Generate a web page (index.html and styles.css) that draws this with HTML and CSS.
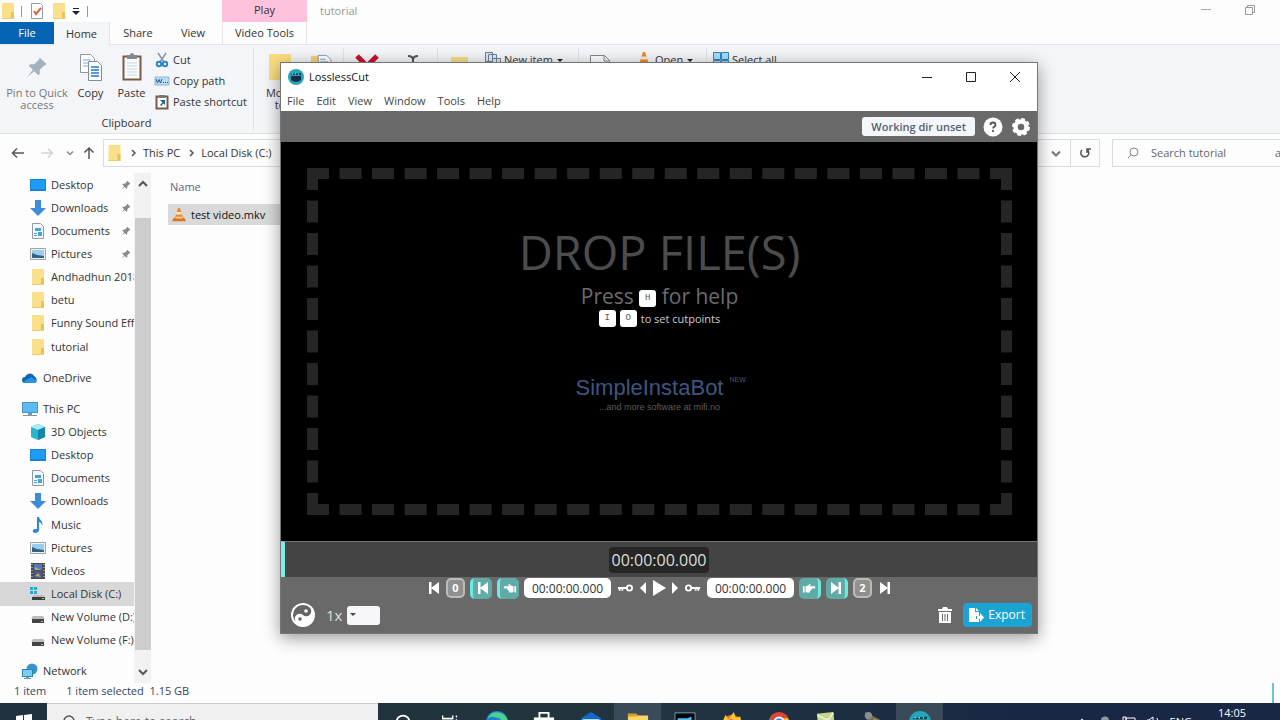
FILE: index.html
```html
<!DOCTYPE html>
<html lang="en">
<head>
<meta charset="utf-8">
<title>LosslessCut</title>
<link rel="stylesheet" href="styles.css">
</head>
<body>
<svg class="defs" aria-hidden="true">
  <defs>
    <symbol id="folder" viewBox="0 0 14 16"><path d="M1 0h12v16H1z" fill="#fbe08c"/><path d="M10 9h3v7h-3z" fill="#e9c25a"/><path d="M1 15h12v1H1z" fill="#eecb6b"/></symbol>
    <symbol id="desktop" viewBox="0 0 16 16"><path d="M0 2h16v12H0z" fill="#1683d8"/><path d="M1 3h14v9H1z" fill="#1e9bf5"/></symbol>
    <symbol id="download" viewBox="0 0 16 16"><path d="M5 0h6v8h5l-8 8-8-8h5z" fill="#3c8cd9"/></symbol>
    <symbol id="document" viewBox="0 0 16 16"><path d="M2.500.500h8l3 3v12h-11z" fill="#f4f8fa" stroke="#8c9aa5"/><path d="M5 5h6v3H5zM4 10h3v1H4zM4 12h3v1H4zM8 9h4v4H8z" fill="#4aa3d6"/></symbol>
    <symbol id="picture" viewBox="0 0 16 16"><path d="M.5 2.500h15v11H.5z" fill="#eef4f8" stroke="#9aa4ac"/><path d="M2 4h12v8H2z" fill="#9ccbee"/><path d="M2 7l5 2 7 1v2H2z" fill="#33647e"/></symbol>
    <symbol id="cloud" viewBox="0 0 16 16"><path d="M3 13a3 3 0 0 1 0-6 5 5 0 0 1 9-1 4 4 0 0 1 1 7z" fill="#1264b4"/><path d="M1 12l8-5 6 4a3 3 0 0 1-2 2H3z" fill="#2791e3"/></symbol>
    <symbol id="pc" viewBox="0 0 16 16"><path d="M0 1h16v11H0z" fill="#4a90c2"/><path d="M1 2h14v9H1z" fill="#5cbaf5"/><path d="M6 12h4v2H6zM1 14h14v1H1z" fill="#7b97aa"/></symbol>
    <symbol id="cube" viewBox="0 0 16 16"><path d="M8 0l7 3v10l-7 3-7-3V3z" fill="#27b5cf"/><path d="M8 0l7 3-7 3-7-3z" fill="#a8ecf3"/><path d="M8 6l7-3v10l-7 3z" fill="#1586a9"/></symbol>
    <symbol id="music" viewBox="0 0 16 16"><path d="M7 0h2c0 3 5 4 3 9 0-3-2-4-3-4v8c0 2-2 3-4 3-3 0-3-4 0-4h2z" fill="#2789e0"/></symbol>
    <symbol id="video" viewBox="0 0 16 16"><path d="M1 0h14v16H1z" fill="#4c4c50"/><path d="M4 1h8v6H4z" fill="#5578b8"/><path d="M4 8h8v7H4z" fill="#3f5a94"/><path d="M5 4l6 3H5zM5 13l3-3 3 4z" fill="#c2a552"/><path d="M2 1v14M14 1v14" stroke="#ddd" stroke-dasharray="1 2"/></symbol>
    <symbol id="disk" viewBox="0 0 16 16"><path d="M3 7h10l2 3H1z" fill="#bcbcbc"/><path d="M2 10h12v4H2z" fill="#444"/><path d="M11 12h2v1h-2z" fill="#8fdc9c"/></symbol>
    <symbol id="windisk" viewBox="0 0 16 16"><path d="M0 1h3v3H0zM4 1h3v3H4zM0 5h3v3H0zM4 5h3v3H4z" fill="#22a9dd"/><path d="M4 9h9l2 2H2z" fill="#bcbcbc"/><path d="M2 11h13v3H2z" fill="#3d3d3d"/><path d="M12 12h2v1h-2z" fill="#8fdc9c"/></symbol>
    <symbol id="network" viewBox="0 0 16 16"><circle cx="10" cy="6" r="5.500" fill="#3b93cc"/><path d="M0 6h11v8H0z" fill="#2e84bd"/><path d="M1 7h9v6H1z" fill="#77cdf5"/><path d="M4 14h3v1h2v1H2v-1h2z" fill="#7b97aa"/></symbol>
    <symbol id="pin" viewBox="0 0 16 16"><path d="M10 1l5 5-2 1-3 3 0 3-1 1-3-3-5 4 4-5-3-3 1-1h3l3-3z" fill="currentColor"/></symbol>
    <symbol id="cone" viewBox="0 0 16 16"><path d="M7 0h2l4 12H3z" fill="#f08a1d"/><path d="M5.500 4.500h5l1 3h-7z" fill="#f3ece4"/><path d="M2 11h12l2 4H0z" fill="#e0731b"/><path d="M4 10h8v2H4z" fill="#f6d2ae"/></symbol>
    <symbol id="pages" viewBox="0 0 24 28"><path d="M1.500 1.500h10l4 4v14h-14z" fill="#fff" stroke="#8b97a6"/><path d="M4 7h8M4 10h8M4 13h8" stroke="#7da7d9"/><path d="M9.500 8.500h9l4 4v15h-13z" fill="#fff" stroke="#7f8c9c"/><path d="M12 14h8M12 17h8M12 20h8M12 23h8" stroke="#5c97dc" stroke-width="2"/></symbol>
    <symbol id="clipboard" viewBox="0 0 20 28"><path d="M1.500 3.500h17v23h-17z" fill="#fbfcfe" stroke="#7a5a48" stroke-width="2"/><path d="M5 2h3a2 2 0 0 1 4 0h3v4H5z" fill="#84888f"/><path d="M5 10h10M5 13h10M5 16h10M5 19h10M5 22h10" stroke="#c3d3e8"/></symbol>
    <symbol id="skipback" viewBox="0 0 12 14"><path d="M1 1h2.500v12H1zM11 1v12L3 7z" fill="currentColor"/></symbol>
    <symbol id="skipnext" viewBox="0 0 12 14"><path d="M8.500 1H11v12H8.500zM1 1v12l8-6z" fill="currentColor"/></symbol>
    <symbol id="hand" viewBox="0 0 16 14"><path d="M1 5h2v7H1zM4 5l3-1 2-2 1 1-1 2h6v2.500h-4V9h-1v1.500H9V12H5l-1-1z" fill="currentColor"/></symbol>
    <symbol id="key" viewBox="0 0 18 10"><circle cx="4" cy="5" r="3" fill="none" stroke="currentColor" stroke-width="2"/><path d="M7 4h10v2h-1v2h-2V6h-1v2h-2V6H7z" fill="currentColor"/></symbol>
    <symbol id="losslesscut" viewBox="0 0 16 16"><circle cx="8" cy="8" r="8" fill="#22a5bd"/><path d="M3 5l10-1v2H3z" fill="#173e4d"/><path d="M3 7h10v4q-5 4-10 0z" fill="#142f47"/><path d="M4 5h1M7 5h1M10 5h1" stroke="#bdf0f4"/></symbol>
    <symbol id="winlogo" viewBox="0 0 16 16"><path d="M0 2l7-1v7H0zM8 1l8-1v8H8zM0 9h7v6l-7-1zM8 9h8v7l-8-1z" fill="#fff"/></symbol>
  </defs>
</svg>

<main class="desktop">
  <section class="explorer" aria-label="File Explorer">
    <header class="ex-title">
      <div class="quick">
        <svg class="i14"><use href="#folder"/></svg><i class="bar"></i>
        <svg class="i16" viewBox="0 0 16 16"><path d="M2.500.500h9l2 2v13h-11z" fill="#fff" stroke="#99a"/><path d="M5 8l2 3 5-6" fill="none" stroke="#e0603f" stroke-width="2"/></svg>
        <svg class="i14"><use href="#folder"/></svg>
        <svg class="i8" viewBox="0 0 8 8"><path d="M1 1h6v1H1zM0 4h8L4 8z" fill="#222"/></svg><i class="bar"></i>
      </div>
      <div class="context">Play</div>
      <h1 class="ex-name">tutorial</h1>
      <div class="ex-ctl">
        <button aria-label="Minimize"><svg class="i12" viewBox="0 0 12 12"><path d="M1 5.500h10" stroke="#aaa"/></svg></button>
        <button aria-label="Restore"><svg class="i12" viewBox="0 0 12 12"><path d="M1.500 3.500h7v7h-7zM3.500 3V1.500h7v7H9" fill="none" stroke="#999"/></svg></button>
      </div>
    </header>
    <nav class="tabs">
      <button class="tab file">File</button><button class="tab home">Home</button><button class="tab share">Share</button><button class="tab view">View</button><button class="tab tools">Video Tools</button>
    </nav>
    <div class="ribbon">
      <div class="rgroup clip">
        <div class="rbody">
          <button class="big pinbig"><svg viewBox="0 0 16 16"><use href="#pin"/></svg>Pin to Quick access</button>
          <button class="big"><svg><use href="#pages"/></svg>Copy</button>
          <button class="big"><svg><use href="#clipboard"/></svg>Paste</button>
          <div class="smalls">
            <button><svg class="i16" viewBox="0 0 16 16"><path d="M4 1l6 9M12 1l-6 9" stroke="#8396a8" stroke-width="1.500"/><circle cx="5" cy="12" r="2.200" fill="none" stroke="#2a86c8" stroke-width="2"/><circle cx="11" cy="12" r="2.200" fill="none" stroke="#2a86c8" stroke-width="2"/></svg>Cut</button>
            <button><svg class="i16" viewBox="0 0 16 16"><path d="M1 4h14v8H1z" fill="#b9dcf2" stroke="#8fb9d6"/><path d="M2 6l1.500 4L5 6.500 6.500 10 8 6M9 9.500h1M11 9.500h1M13 9.500h1" fill="none" stroke="#265b85"/></svg>Copy path</button>
            <button><svg class="i16" viewBox="0 0 16 16"><path d="M2.500 2.500h11v12h-11z" fill="#fff" stroke="#7a5a48" stroke-width="2"/><path d="M5 1h6v3H5z" fill="#777"/><path d="M6 6h5v5L9.500 9.500 7 12 6 11l2.500-2.500z" fill="#23629f"/></svg>Paste shortcut</button>
          </div>
        </div>
        <div class="rlabel">Clipboard</div>
      </div>
      <div class="rgroup organize">
        <div class="rbody">
          <button class="big"><svg viewBox="0 0 24 28"><path d="M1 1h22v26H1z" fill="#fadc80"/><path d="M23 16l-8 5 8 5z" fill="#3277b5"/></svg>Move<br>to</button>
          <button class="big" aria-label="Copy to"><svg viewBox="0 0 28 28"><path d="M1 1h14v26H1z" fill="#f5d277"/><path d="M9.500.500h10l5 5v14h-15z" fill="#fff" stroke="#7f8c9c"/><path d="M12 5h6M12 8h9M12 11h9" stroke="#5c97dc"/></svg></button>
        </div>
      </div>
      <div class="rgroup modify">
        <div class="rbody">
          <button class="big" aria-label="Delete"><svg viewBox="0 0 24 28"><path d="M2 3l20 20M22 3L2 23" stroke="#c8102e" stroke-width="5"/></svg></button>
          <button class="big" aria-label="Rename"><svg viewBox="0 0 24 28"><path d="M7 3q5 0 5 4 0-4 5-4M12 6v18" fill="none" stroke="#555" stroke-width="2"/></svg></button>
        </div>
      </div>
      <div class="rgroup new">
        <div class="rbody">
          <button class="big" aria-label="New folder"><svg viewBox="0 0 24 28"><path d="M4 4h17v22H4z" fill="#fadc80"/></svg></button>
          <div class="smalls"><button><svg class="i16" viewBox="0 0 16 16"><path d="M.5.500h7v9h-7zM3.500 2.500h8v11h-8zM7.500 6.500h8v9h-8z" fill="#dfeaf5" stroke="#67809a"/></svg>New item <svg class="i8" viewBox="0 0 8 8"><path d="M1 3h6L4 6z" fill="#222"/></svg></button></div>
        </div>
      </div>
      <div class="rgroup open">
        <div class="rbody">
          <button class="big" aria-label="Properties"><svg viewBox="0 0 24 28"><path d="M2.500 2.500h14l5 5v19h-19zM16 3v5h5" fill="#fff" stroke="#888"/></svg></button>
          <div class="smalls"><button><svg class="i16"><use href="#cone"/></svg>Open <svg class="i8" viewBox="0 0 8 8"><path d="M1 3h6L4 6z" fill="#222"/></svg></button></div>
        </div>
      </div>
      <div class="rgroup select">
        <div class="smalls"><button><svg class="i16" viewBox="0 0 16 16"><path d="M.5.500h7v7h-7zM8.500.500h7v7h-7zM.5 8.500h7v7h-7zM8.500 8.500h7v7h-7z" fill="#a9dcfa" stroke="#2d86bf"/></svg>Select all</button></div>
      </div>
    </div>
    <div class="addr">
      <div class="arrows">
        <button aria-label="Back"><svg class="i14" viewBox="0 0 14 14"><path d="M13 7H2M6 2.500L1.500 7 6 11.500" fill="none" stroke="#555" stroke-width="1.500"/></svg></button>
        <button aria-label="Forward"><svg class="i14" viewBox="0 0 14 14"><path d="M1 7h11M8 2.500L12.500 7 8 11.500" fill="none" stroke="#d4d4d4" stroke-width="1.500"/></svg></button>
        <button class="recent" aria-label="Recent"><svg class="i8" viewBox="0 0 8 8"><path d="M1 2.500L4 5.500l3-3" fill="none" stroke="#888" stroke-width="1.500"/></svg></button>
        <button aria-label="Up"><svg class="i14" viewBox="0 0 14 14"><path d="M7 13V2M2.500 6.500L7 2l4.500 4.500" fill="none" stroke="#555" stroke-width="1.500"/></svg></button>
      </div>
      <div class="path">
        <svg class="i14"><use href="#folder"/></svg><svg class="chev" viewBox="0 0 8 8"><path d="M3 1l3 3-3 3" fill="none" stroke="#555" stroke-width="1.500"/></svg><a href="#">This PC</a><svg class="chev" viewBox="0 0 8 8"><path d="M3 1l3 3-3 3" fill="none" stroke="#555" stroke-width="1.500"/></svg><a href="#">Local Disk (C:)</a>
        <button class="drop" aria-label="Previous locations"><svg class="i12" viewBox="0 0 12 12"><path d="M2 4.500L6 8.500l4-4" fill="none" stroke="#777" stroke-width="2"/></svg></button>
        <button class="refresh" aria-label="Refresh"><svg class="i12" viewBox="0 0 12 12"><path d="M3 3a4 4 0 1 0 5-.5M8 6V2h4" fill="none" stroke="#555" stroke-width="1.500"/></svg></button>
      </div>
      <label class="search"><svg class="i12" viewBox="0 0 12 12"><circle cx="7" cy="5" r="4" fill="none" stroke="#888"/><path d="M4 8l-3 3" stroke="#888"/></svg><input type="text" placeholder="Search tutorial" aria-label="Search tutorial"><span>a</span></label>
    </div>
    <div class="ex-body">
      <nav class="tree">
        <a href="#"><svg><use href="#desktop"/></svg><span>Desktop</span><svg class="pin"><use href="#pin"/></svg></a>
        <a href="#"><svg><use href="#download"/></svg><span>Downloads</span><svg class="pin"><use href="#pin"/></svg></a>
        <a href="#"><svg><use href="#document"/></svg><span>Documents</span><svg class="pin"><use href="#pin"/></svg></a>
        <a href="#"><svg><use href="#picture"/></svg><span>Pictures</span><svg class="pin"><use href="#pin"/></svg></a>
        <a href="#"><svg><use href="#folder"/></svg><span>Andhadhun 2018</span></a>
        <a href="#"><svg><use href="#folder"/></svg><span>betu</span></a>
        <a href="#"><svg><use href="#folder"/></svg><span>Funny Sound Eff</span></a>
        <a href="#"><svg><use href="#folder"/></svg><span>tutorial</span></a>
        <a href="#" class="root"><svg><use href="#cloud"/></svg><span>OneDrive</span></a>
        <a href="#" class="root"><svg><use href="#pc"/></svg><span>This PC</span></a>
        <a href="#"><svg><use href="#cube"/></svg><span>3D Objects</span></a>
        <a href="#"><svg><use href="#desktop"/></svg><span>Desktop</span></a>
        <a href="#"><svg><use href="#document"/></svg><span>Documents</span></a>
        <a href="#"><svg><use href="#download"/></svg><span>Downloads</span></a>
        <a href="#"><svg><use href="#music"/></svg><span>Music</span></a>
        <a href="#"><svg><use href="#picture"/></svg><span>Pictures</span></a>
        <a href="#"><svg><use href="#video"/></svg><span>Videos</span></a>
        <a href="#" class="current"><svg><use href="#windisk"/></svg><span>Local Disk (C:)</span></a>
        <a href="#"><svg><use href="#disk"/></svg><span>New Volume (D:)</span></a>
        <a href="#"><svg><use href="#disk"/></svg><span>New Volume (F:)</span></a>
        <a href="#" class="root"><svg><use href="#network"/></svg><span>Network</span></a>
      </nav>
      <div class="scroll">
        <svg class="i12" viewBox="0 0 12 12"><path d="M2 8l4-4 4 4" fill="none" stroke="#555" stroke-width="2"/></svg>
        <div class="thumb"></div>
        <svg class="i12" viewBox="0 0 12 12"><path d="M2 4l4 4 4-4" fill="none" stroke="#555" stroke-width="2"/></svg>
      </div>
      <table class="files">
        <thead><tr><th>Name</th></tr></thead>
        <tbody><tr><td><svg class="i14"><use href="#cone"/></svg>test video.mkv</td></tr></tbody>
      </table>
    </div>
    <footer class="status"><span>1 item</span><span>1 item selected&nbsp; 1.15 GB</span><i></i></footer>
  </section>

  <div class="taskclip">
    <div class="taskbar">
      <button class="start" aria-label="Start"><svg class="i16"><use href="#winlogo"/></svg></button>
      <label class="tsearch"><svg class="i14" viewBox="0 0 14 14"><circle cx="8" cy="6" r="5" fill="none" stroke="#555" stroke-width="1.500"/><path d="M4 10l-3 3" stroke="#555" stroke-width="1.500"/></svg><input type="text" placeholder="Type here to search" aria-label="Type here to search"></label>
      <div class="apps">
        <button aria-label="Cortana"><svg viewBox="0 0 24 24"><circle cx="12" cy="12" r="7" fill="none" stroke="#fff" stroke-width="2"/></svg></button>
        <button aria-label="Task View"><svg viewBox="0 0 24 24"><path d="M4 5v3h11V5M4 10h11v6H4zM19 5v2M19 9v8" fill="none" stroke="#fff" stroke-width="1.500"/></svg></button>
        <button aria-label="Edge"><svg viewBox="0 0 24 24"><circle cx="12" cy="12" r="12" fill="#1d86d0"/><path d="M2 7a12 12 0 0 1 22 5q-2 4-8 2 2-7-5-7-5 0-8 4z" fill="#4fcf8c"/><path d="M0 12q3-8 10-5 5 2 3 7l-5 8Q1 20 0 12z" fill="#1684cf"/></svg></button>
        <button aria-label="Store"><svg viewBox="0 0 24 24"><path d="M1 7h22v15H1z" fill="#fff"/><path d="M7 8V2h10v6" fill="none" stroke="#fff" stroke-width="2"/><path d="M8 11h3v3H8zM13 11h3v3h-3z" fill="#1d3340"/></svg></button>
        <button aria-label="Mail"><svg viewBox="0 0 24 24"><path d="M12 1l11 7v14H1V8z" fill="#1269c7"/><path d="M3 9h18v8H3z" fill="#f4f9fd"/></svg></button>
        <button class="on" aria-label="File Explorer"><svg viewBox="0 0 24 24"><path d="M1 3h9l2 2h11v16H1z" fill="#fbd467"/><path d="M1 3h9l2 3H1z" fill="#d99c27"/></svg></button>
        <button aria-label="Video editor"><svg viewBox="0 0 24 24"><path d="M1 2h22v20H1z" fill="#05080c" stroke="#72a8b8"/><path d="M4 8h11l4-2v9H4z" fill="#53bbed"/></svg></button>
        <button aria-label="Firefox"><svg viewBox="0 0 24 24"><circle cx="12" cy="14" r="10" fill="#f36a2b"/><path d="M2 11l3-7 3 5 6-8 2 6 5-1 2 10-9 5z" fill="#fdc52e"/><circle cx="11" cy="14" r="5" fill="#974cd2"/></svg></button>
        <button aria-label="Chrome"><svg viewBox="0 0 24 24"><circle cx="12" cy="12" r="11" fill="#df4537"/><path d="M2 7l8 15A11 11 0 0 1 2 7z" fill="#31a852"/><path d="M14 23a11 11 0 0 0 8-15h-9z" fill="#f9c72d"/><circle cx="12" cy="12" r="5" fill="#4285f4" stroke="#fff" stroke-width="2"/></svg></button>
        <button aria-label="Notes"><svg viewBox="0 0 24 24"><path d="M2 3l18-2 2 20H4z" fill="#c5d890"/><path d="M3 5l11 5 6-8" fill="none" stroke="#e9efc8" stroke-width="2"/></svg></button>
        <button aria-label="Image editor"><svg viewBox="0 0 24 24"><path d="M3 1l8 4 8 4 3 9-9 4-7-8z" fill="#766c55"/><circle cx="7" cy="5" r="4" fill="#8b8d91"/><path d="M12 8l7 3-2 5z" fill="#a3a642"/></svg></button>
        <button class="on" aria-label="LosslessCut"><svg><use href="#losslesscut"/></svg></button>
      </div>
      <div class="tray">
        <svg class="i12" viewBox="0 0 12 12"><path d="M2 8l4-4 4 4" fill="none" stroke="#fff" stroke-width="2"/></svg>
        <svg class="i14" viewBox="0 0 14 14"><path d="M3 12a3 3 0 0 1 0-6 4 4 0 0 1 8-1 4 4 0 0 1 0 7z" fill="#8e98a4"/></svg>
        <svg class="i14" viewBox="0 0 14 14"><path d="M4 3h9v7H4zM1 2h3v10H1z" fill="none" stroke="#fff"/></svg>
        <svg class="i14" viewBox="0 0 14 14"><path d="M1 5h2l4-3v10L3 9H1zM9 5q1 2 0 4M11 3q2 4 0 8" fill="none" stroke="#fff"/></svg>
        <span>ENG</span><time>14:05</time>
      </div>
    </div>
  </div>

  <section class="win" aria-label="LosslessCut">
    <header class="win-title">
      <svg class="i16"><use href="#losslesscut"/></svg><h2>LosslessCut</h2>
      <div class="win-ctl">
        <button aria-label="Minimize"><svg class="i12" viewBox="0 0 12 12"><path d="M1 6.500h10" stroke="#222"/></svg></button>
        <button aria-label="Maximize"><svg class="i12" viewBox="0 0 12 12"><path d="M1.500 1.500h9v9h-9z" fill="none" stroke="#222"/></svg></button>
        <button aria-label="Close"><svg class="i12" viewBox="0 0 12 12"><path d="M1 1l10 10M11 1L1 11" stroke="#222"/></svg></button>
      </div>
    </header>
    <nav class="menu"><button>File</button><button>Edit</button><button>View</button><button>Window</button><button>Tools</button><button>Help</button></nav>
    <div class="topbar">
      <button class="wd">Working dir unset</button>
      <button aria-label="Help"><svg class="i20" viewBox="0 0 20 20"><circle cx="10" cy="10" r="9.500" fill="#fff"/><path d="M7.500 8q0-2.500 2.500-2.500T12.500 8q0 1-1.200 1.800T10 11.500M10 13v2" fill="none" stroke="#555" stroke-width="1.800"/></svg></button>
      <button aria-label="Settings"><svg class="i20" viewBox="0 0 20 20"><circle cx="10" cy="10" r="5.500" fill="none" stroke="#fff" stroke-width="4.500"/><circle cx="10" cy="10" r="7.500" fill="none" stroke="#fff" stroke-width="3" stroke-dasharray="3.500 2.390"/></svg></button>
    </div>
    <div class="stage">
      <div class="dropzone">
        <div class="dz-title">DROP FILE(S)</div>
        <div class="dz-help">Press <kbd>H</kbd> for help</div>
        <div class="dz-cut"><kbd>I</kbd><kbd>O</kbd><span>to set cutpoints</span></div>
        <div class="promo"><a href="#">SimpleInstaBot<sup>NEW</sup></a><small>...and more software at mifi.no</small></div>
      </div>
    </div>
    <div class="timeline"><output>00:00:00.000</output></div>
    <div class="controls">
      <button class="w15" aria-label="Jump to start"><svg class="i14"><use href="#skipback"/></svg></button>
      <button class="seg">0</button>
      <button class="teal l" aria-label="Jump to cut start"><svg class="i14"><use href="#skipback"/></svg></button>
      <button class="teal l" aria-label="Set cut start"><svg class="i14 flip"><use href="#hand"/></svg></button>
      <input type="text" value="00:00:00.000" aria-label="Cut start">
      <button class="w16" aria-label="Previous keyframe"><svg class="i16 flip"><use href="#key"/></svg></button>
      <button class="w8" aria-label="Previous frame"><svg viewBox="0 0 8 12"><path d="M7 0v12L1 6z" fill="#fff"/></svg></button>
      <button class="w14" aria-label="Play"><svg viewBox="0 0 14 16"><path d="M1 0l13 8-13 8z" fill="#fff"/></svg></button>
      <button class="w8" aria-label="Next frame"><svg viewBox="0 0 8 12"><path d="M1 0v12l6-6z" fill="#fff"/></svg></button>
      <button class="w16" aria-label="Next keyframe"><svg class="i16"><use href="#key"/></svg></button>
      <input type="text" value="00:00:00.000" aria-label="Cut end">
      <button class="teal r" aria-label="Set cut end"><svg class="i14"><use href="#hand"/></svg></button>
      <button class="teal r" aria-label="Jump to cut end"><svg class="i14"><use href="#skipnext"/></svg></button>
      <button class="seg">2</button>
      <button class="w15" aria-label="Jump to end"><svg class="i14"><use href="#skipnext"/></svg></button>
    </div>
    <footer class="bottom">
      <button aria-label="Simple mode"><svg class="i24" viewBox="0 0 24 24"><circle cx="12" cy="12" r="12" fill="#fff"/><path d="M12 2a10 10 0 0 0 0 20 5 5 0 0 1 0-10 5 5 0 0 0 0-10z" fill="#666" transform="rotate(40 12 12)"/><circle cx="15" cy="8" r="1.800" fill="#fff"/><circle cx="9" cy="16" r="1.800" fill="#666"/></svg></button>
      <label for="speed">1x</label>
      <span class="speed"><select id="speed"><option></option></select><svg class="i8" viewBox="0 0 8 8"><path d="M1 2h6L4 5z" fill="#444"/></svg></span>
      <button class="trash" aria-label="Delete"><svg class="i16" viewBox="0 0 16 16"><path d="M1 2h4l1-2h4l1 2h4v2H1zM2 5h12v11H2z" fill="#fff"/><path d="M5.500 7v7M8 7v7M10.500 7v7" stroke="#696969"/></svg></button>
      <button class="export"><svg class="i16" viewBox="0 0 16 16"><path d="M1 1h6v4h4v4H8v3h3v3H1zM8 1l3 3H8z" fill="#fff"/><path d="M9 9h3V6l4 4.500L12 15v-3H9z" fill="#fff"/></svg>Export</button>
    </footer>
  </section>
</main>
</body>
</html>
```
FILE: styles.css
```css
* { box-sizing: border-box; }
body {
  margin: 0;
  font: 11px/16px "Open Sans", "Noto Sans", sans-serif;
  color: #333;
  background: #fdfdfe;
}
button, input, select { font: inherit; color: inherit; border: 0; padding: 0; margin: 0; background: none; }
button { display: flex; align-items: center; justify-content: center; white-space: nowrap; }
a { color: inherit; text-decoration: none; }
h1, h2 { font: inherit; margin: 0; }
svg { display: block; flex: none; }
.defs { width: 0; height: 0; position: absolute; }
.i8 { width: 8px; height: 8px; }
.i12 { width: 12px; height: 12px; }
.i14 { width: 14px; height: 14px; }
.i16 { width: 16px; height: 16px; }
.i20 { width: 20px; height: 20px; }
.i24 { width: 24px; height: 24px; }
.flip { transform: scaleX(-1); }

.desktop { position: relative; display: flex; flex-direction: column; height: 100vh; overflow: hidden; }
.explorer { flex: 1; min-height: 0; display: flex; flex-direction: column; }

.ex-title { display: flex; height: 22px; line-height: 14px; }
.quick { width: 222px; display: flex; align-items: center; gap: 7px; padding-left: 1px; }
.quick .bar { width: 1px; height: 11px; background: #999; }
.quick .i14, .tree svg { width: 16px; height: 16px; }
.quick .i14 { margin: 0 -2px 0 -1px; }
.context { width: 85px; padding-top: 3px; text-align: center; background: #ffc1dc; }
.ex-name { padding: 4px 13px; color: #999; }
.ex-ctl { margin-left: auto; display: flex; gap: 32px; padding: 0 24px 2px 0; }
.tabs { display: flex; height: 23px; border-bottom: 1px solid #e3e4e7; }
.tab { width: 54px; }
.file { background: #0563b4; color: #fff; }
.home { width: 56px; background: #f4f5f9; border-right: 1px solid #e3e4e7; height: 23px; }
.share { width: 56px; }
.tools { width: 85px; margin-left: 2px; border: 1px solid #e8e3e6; border-width: 0 1px; }

.ribbon { display: flex; height: 89px; background: #f4f5f9; border-bottom: 1px solid #dfe1e5; }
.rgroup { border-right: 1px solid #e2e3e8; margin: 3px 0; overflow: hidden; }
.rbody { display: flex; }
.clip { width: 254px; }
.organize { width: 90px; padding-left: 4px; }
.modify { width: 94px; }
.new { width: 141px; }
.open { width: 128px; }
.select { padding-left: 4px; border: 0; }
.big { flex-direction: column; justify-content: flex-start; width: 41px; padding-top: 5px; gap: 6px; line-height: 12px; white-space: normal; }
.big svg { width: 24px; height: 28px; }
.pinbig { width: 70px; color: #777; padding: 5px 0 0 4px; }
.pinbig svg { color: #a5b1bf; width: 22px; }
.organize .big { width: 42px; gap: 0; padding-left: 2px; }
.organize .big svg { margin-bottom: 6px; }
.modify .big { width: 46px; }
.smalls { display: flex; flex-direction: column; gap: 5px; padding: 4px 0 0 2px; }
.smalls button { gap: 3px; justify-content: flex-start; }
.new .smalls, .open .smalls { padding-left: 6px; }
.open .smalls { padding-left: 16px; }
.rlabel { text-align: center; padding-top: 4px; }

.addr { display: flex; height: 39px; padding-top: 5px; gap: 12px; }
.arrows { width: 91px; display: flex; align-items: center; padding-left: 11px; gap: 15px; height: 28px; }
.arrows .recent { margin: 0 -7px 0 -3px; }
.path { flex: 1; display: flex; align-items: center; height: 28px; border: 1px solid #dcdcdc; padding-left: 3px; }
.path > .i14 { width: 15px; height: 16px; }
.chev { width: 8px; height: 8px; margin: 0 6px 0 7px; }
.path .drop { margin-left: auto; width: 28px; }
.refresh { width: 29px; height: 26px; border-left: 1px solid #dcdcdc; }
.search { width: 168px; height: 28px; border: 1px solid #dcdcdc; border-right: 0; display: flex; align-items: center; gap: 12px; padding-left: 14px; overflow: hidden; color: #666; }
.search input { width: 112px; }
input::placeholder { color: #666; opacity: 1; }

.ex-body { flex: 1; min-height: 0; display: flex; }
.tree { width: 134px; display: flex; flex-direction: column; overflow: hidden; }
.tree a { flex: 1; min-height: 0; display: flex; align-items: center; gap: 5px; padding-left: 30px; white-space: nowrap; }
.tree .root { margin-top: 8px; padding-left: 22px; }
.tree .current { background: #d8d8d9; }
.tree .pin { width: 10px; height: 10px; margin: 0 3px 0 auto; color: #888; }
.scroll { width: 17px; display: flex; flex-direction: column; align-items: center; padding: 5px 0 5px 1px; background: #f2f2f3; }
.thumb { flex: 1; width: 100%; background: #cdcdce; margin: 28px 0 16px; }
.files { flex: 1; border-collapse: collapse; margin: 4px 0 auto 17px; color: #111; }
.files th { font-weight: 400; text-align: left; color: #5a6784; padding: 2px 2px 9px; height: 27px; }
.files td { display: flex; align-items: center; gap: 5px; height: 21px; padding-left: 4px; background: #d9d9da; width: 240px; }
.status { display: flex; gap: 20px; height: 20px; padding-left: 14px; color: #33456b; }
.status i { width: 2px; background: #6cc1e2; margin: 0 6px 0 auto; }

.taskclip { height: 17px; overflow: hidden; }
.taskbar { display: flex; height: 37px; background: linear-gradient(90deg, #20323d, #22353f 50%, #1a2744 80%); color: #fff; }
.taskbar > * { flex: none; }
.start { width: 47px; }
.tsearch { width: 331px; display: flex; align-items: center; gap: 11px; padding-left: 14px; background: #f0f0f0; border-top: 1px solid #ccc; font-size: 12px; }
.apps { display: flex; padding-left: 1px; }
.apps button { width: 47px; height: 37px; }
.apps svg { width: 22px; height: 22px; }
.apps .on { background: #3a4b57; }
.tray { margin-left: auto; display: flex; align-items: center; gap: 10px; padding-right: 34px; }
.tray time { height: 36px; margin-left: 16px; padding-top: 1px; }

.win {
  position: absolute; left: 280px; top: 62px; right: 242px; bottom: 86px;
  display: flex; flex-direction: column;
  border: 1px solid #757575; background: #696969; color: #fff;
  box-shadow: 0 4px 16px rgba(0, 0, 0, .4);
}
.win-title { height: 28px; background: #fff; color: #111; display: flex; align-items: center; padding-left: 7px; gap: 5px; }
.win-ctl { margin-left: auto; display: flex; }
.win-ctl button { width: 44px; height: 28px; }
.menu { height: 20px; background: #fff; color: #444; display: flex; gap: 12px; padding-left: 6px; }
.topbar { height: 31px; display: flex; align-items: center; justify-content: flex-end; gap: 8px; padding-right: 6px; }
.wd { height: 19px; padding: 0 9px; background: #f5f6f9; border-radius: 3px; color: #536078; font-weight: 600; }
.stage { flex: 1; min-height: 0; background: #000; padding: 26px 25px 26px 26px; display: flex; }
.dropzone { flex: 1; border: 11px dashed #252525; display: flex; flex-direction: column; align-items: center; color: #5c5c5c; padding-top: 43px; }
.dz-title { font-size: 47px; line-height: 60px; color: #4c4c4c; }
.dz-help { font-size: 21px; line-height: 28px; color: #6b6b6b; }
.dz-cut { display: flex; align-items: center; gap: 4px; color: #ccc; line-height: 16px; }
kbd { display: inline-flex; align-items: center; justify-content: center; width: 17px; height: 17px; border-radius: 3px; background: #fff; color: #555; font: 9px/17px "Liberation Mono", monospace; vertical-align: middle; }
.promo { display: flex; flex-direction: column; align-items: center; margin-top: 48px; font-family: "Liberation Sans", Arial, sans-serif; }
.promo a { position: relative; font-size: 22px; line-height: 26px; color: #3d5680; margin-right: 20px; }
.promo sup { position: absolute; left: 100%; top: 1px; margin-left: 6px; font-size: 7px; line-height: 8px; }
.promo small { font-size: 9px; line-height: 12px; }
.timeline { height: 36px; background: #444; border-top: 1px solid #777; border-left: 4px solid #7eebe6; display: flex; align-items: center; justify-content: center; padding-right: 4px; }
.timeline output { background: #262626; border-radius: 4px; padding: 3px; font-size: 16px; line-height: 20px; color: #ddd; }
.controls { height: 22px; display: flex; align-items: center; justify-content: center; gap: 5px; }
.controls input { width: 87px; height: 20px; border-radius: 5px; background: #fff; color: #333; text-align: center; font-size: 12px; }
.w15 { width: 15px; }
.w16 { width: 18px; }
.w14, .w14 svg { width: 14px; height: 16px; }
.w8, .w8 svg { width: 8px; height: 12px; }
.seg { width: 19px; height: 20px; border: 2px solid #bbb; border-radius: 5px; background: #909090; font-weight: 700; }
.teal { width: 22px; height: 21px; border-radius: 5px; background: #61aba7; }
.l { border-left: 3px solid #6deae4; }
.r { border-right: 3px solid #6deae4; }
.bottom { height: 34px; display: flex; align-items: center; padding: 0 5px 2px 10px; }
.bottom label { font-size: 15px; margin: 0 5px 0 11px; color: #ddd; }
.speed { display: grid; align-items: center; }
.speed > * { grid-area: 1 / 1; }
.speed select { appearance: none; width: 33px; height: 19px; border-radius: 3px; background: #f7f7f9; }
.speed svg { margin-left: 2px; }
.trash { margin-left: auto; }
.export { height: 24px; margin-left: 10px; padding: 0 7px 0 5px; gap: 4px; border-radius: 4px; background: #1ba4d3; font-size: 12px; }
```
